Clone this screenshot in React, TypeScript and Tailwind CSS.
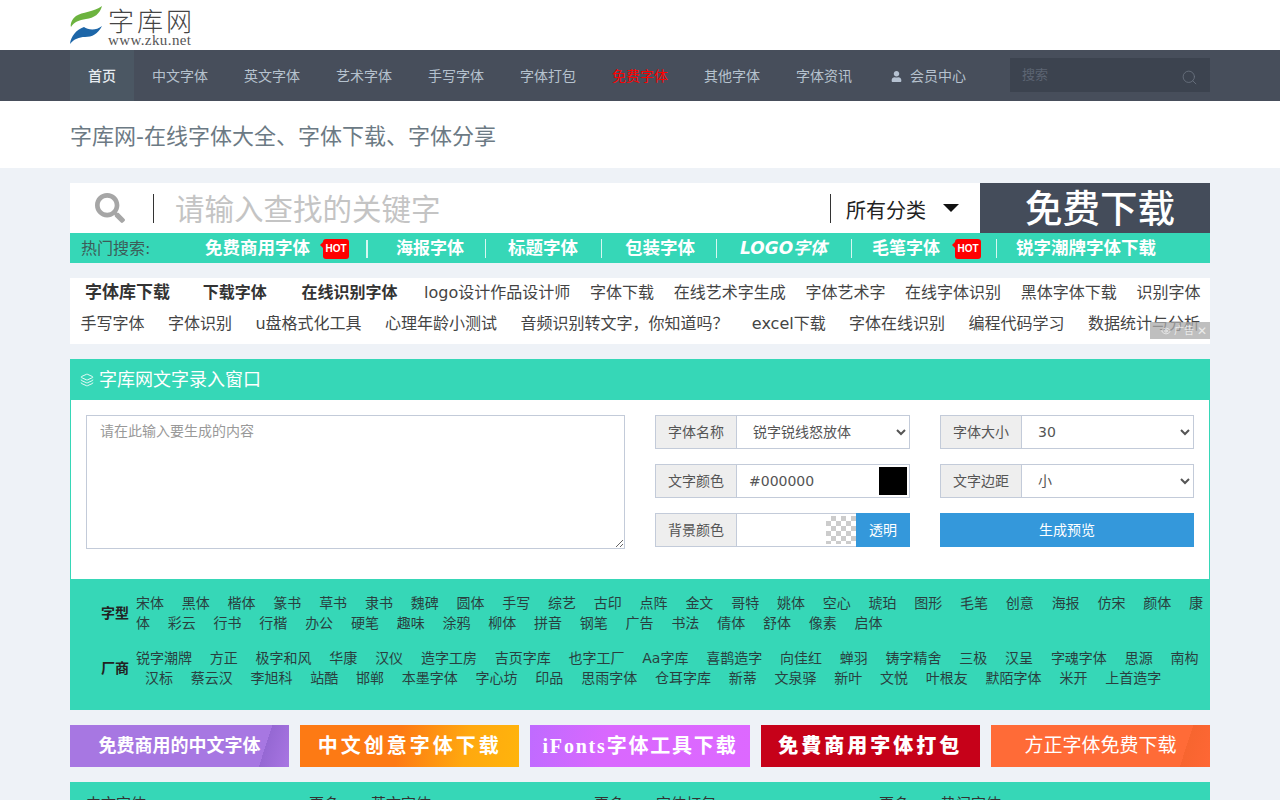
import { Eye, Layers, Search } from 'lucide-react';
import { FaSearch, FaUser } from 'react-icons/fa';

const navItems = ['中文字体', '英文字体', '艺术字体', '手写字体', '字体打包', '免费字体', '其他字体', '字体资讯'];

const hotRowOne = [
  { text: '字体库下载', cls: 'text-[17px] font-bold text-[#333] ml-0' },
  { text: '下载字体', cls: 'font-bold text-[#333] ml-[13px]' },
  { text: '在线识别字体', cls: 'font-bold text-[#333] ml-[15px]' },
  { text: 'logo设计作品设计师', cls: 'ml-[7px]' },
  { text: '字体下载', cls: '' },
  { text: '在线艺术字生成', cls: '' },
  { text: '字体艺术字', cls: '' },
  { text: '在线字体识别', cls: '' },
  { text: '黑体字体下载', cls: '' },
  { text: '识别字体', cls: '' },
];

const hotRowTwo = ['手写字体', '字体识别', 'u盘格式化工具', '心理年龄小测试', '音频识别转文字，你知道吗？', 'excel下载', '字体在线识别', '编程代码学习', '数据统计与分析'];

const types = ['宋体', '黑体', '楷体', '篆书', '草书', '隶书', '魏碑', '圆体', '手写', '综艺', '古印', '点阵', '金文', '哥特', '姚体', '空心', '琥珀', '图形', '毛笔', '创意', '海报', '仿宋', '颜体', '康体', '彩云', '行书', '行楷', '办公', '硬笔', '趣味', '涂鸦', '柳体', '拼音', '钢笔', '广告', '书法', '倩体', '舒体', '像素', '启体'];

const makers = ['锐字潮牌', '方正', '极字和风', '华康', '汉仪', '造字工房', '吉页字库', '也字工厂', 'Aa字库', '喜鹊造字', '向佳红', '蝉羽', '铸字精舍', '三极', '汉呈', '字魂字体', '思源', '南构', '汉标', '蔡云汉', '李旭科', '站酷', '邯郸', '本墨字体', '字心坊', '印品', '思雨字体', '仓耳字库', '新蒂', '文泉驿', '新叶', '文悦', '叶根友', '默陌字体', '米开', '上首造字'];

const banners = [
  { text: '免费商用的中文字体', cls: 'bg-[linear-gradient(108deg,#a777e2_87%,#9568d3_87%,#a472df_97%,#a777e2_100%)] text-[18px] font-bold' },
  { text: '中文创意字体下载', cls: 'bg-[linear-gradient(100deg,#fd7a14_45%,#ffa80f_75%,#ffb40c_100%)] text-[20px] tracking-[3px] font-bold' },
  { text: 'iFonts字体工具下载', cls: 'bg-[linear-gradient(100deg,#bf6bff_0%,#d968fe_35%,#dd68ff_100%)] text-[20px] tracking-[1.8px] font-bold' },
  { text: '免費商用字体打包', cls: 'bg-[#c60119] text-[20px] tracking-[3px] font-black' },
  { text: '方正字体免费下载', cls: 'bg-[linear-gradient(108deg,#ff6b37_87%,#f7652f_87%,#ff6735_100%)] text-[19px]' },
];

function Logo() {
  return (
    <div className="flex items-center h-[50px]">
      <svg width="34" height="39" viewBox="0 0 34 39" className="shrink-0">
        <path d="M32 0C24 6 12 6 6 10C2 13 0 18 1 21C4 16 9 14 16 13C24 12 30 8 32 0Z" fill="#6cb33f" />
        <path d="M0 38C1 30 6 24 14 21C18 24 26 25 32 20C28 28 22 31 15 31C9 31 4 33 0 38Z" fill="#1d66a8" />
      </svg>
      <div className="ml-[4px] pt-[3px] text-[#444]">
        <div className="text-[26px] leading-[27px] tracking-[3px] font-light">字库网</div>
        <div className="text-[15px] leading-[9px] tracking-[0.4px] text-[#555] font-['Liberation_Serif',serif]">www.zku.net</div>
      </div>
    </div>
  );
}

function HotBadge({ cls }: { cls: string }) {
  return (
    <span className={`relative flex items-center justify-center w-[26px] h-[20px] rounded-[3px] bg-[#f00] text-white text-[10px] font-bold font-['Liberation_Sans',sans-serif] ${cls}`}>
      HOT
      <span className="absolute left-[-3px] top-[3px] border-y-[3px] border-r-[3px] border-y-transparent border-r-[#f00]" />
    </span>
  );
}

function FormLabel({ text }: { text: string }) {
  return (
    <span className="flex items-center justify-center shrink-0 w-[81px] h-full bg-[#eee] border-r border-[#c3cbd9] text-[14px] text-[#555]">
      {text}
    </span>
  );
}

export default function App() {
  return (
    <div className="min-h-screen bg-[#eef2f7] font-['DejaVu_Sans','Noto_Sans_CJK_SC',sans-serif]">
      {/* Logo bar */}
      <div className="bg-white h-[50px] px-[70px]">
        <Logo />
      </div>

      {/* Main navigation */}
      <nav className="bg-[#474e5b] h-[51px] px-[70px] flex text-[14px] text-[#b6c2ce]">
        <a className="flex items-center px-[18px] pt-[2px] bg-[#4b5763] text-[#e6ebf0] font-medium">首页</a>
        {navItems.map((item) => (
          <a key={item} className={`flex items-center px-[18px] pt-[2px] ${item === '免费字体' ? 'text-[#f00]' : ''}`}>
            {item}
          </a>
        ))}
        <a className="flex items-center pl-[21px] pr-[18px] pt-[2px]">
          <FaUser className="mr-[8px] text-[#b6c2d2]" size={11} />
          会员中心
        </a>
        <div className="ml-[26px] mt-[8px] flex items-center justify-between w-[200px] h-[34px] bg-[#3c434f] pl-[12px] pr-[12px] text-[13px] text-[#5d6573]">
          <span>搜索</span>
          <Search size={17} strokeWidth={1.2} className="mt-[4px] text-[#6a7280]" />
        </div>
      </nav>

      {/* Page title */}
      <div className="bg-white h-[67px] px-[70px] pt-[3px] flex items-center">
        <h1 className="text-[22px] text-[#6c7a84]">字库网-在线字体大全、字体下载、字体分享</h1>
      </div>

      <main className="mx-[70px] pt-[15px]">
        {/* Search bar */}
        <div className="flex h-[50px] bg-white">
          <div className="flex items-center pl-[25px] w-[105px]">
            <FaSearch size={30} className="text-[#a6a6a6]" />
          </div>
          <div className="flex items-center flex-1 text-[29.5px] text-[#c4c4c4]">
            <span className="w-px h-[29px] bg-[#333] mr-[21px] -ml-[22px]" />
            <span className="pt-[5px]">请输入查找的关键字</span>
          </div>
          <div className="flex items-center w-[150px]">
            <span className="w-px h-[29px] bg-[#333] mr-[15px]" />
            <span className="text-[20px] text-[#222] pt-[6px]">所有分类</span>
            <span className="ml-[17px] border-x-[8px] border-t-[8px] border-x-transparent border-t-[#111]" />
          </div>
          <div className="flex items-center justify-center w-[230px] pl-[10px] pt-[3px] bg-[#444c5a] text-[37.5px] text-white font-medium">免费下载</div>
        </div>

        {/* Hot searches */}
        <div className="flex items-center h-[30px] pt-[1px] bg-[#36d7b7] text-white font-bold text-[17.5px] pl-[11px]">
          <span className="w-[124px] text-[16px] font-normal text-[#3d5c58]">热门搜索:</span>
          <span>免费商用字体</span>
          <HotBadge cls="ml-[13px]" />
          <span className="w-[2px] h-[18px] bg-white/80 ml-[17px]" />
          <span className="ml-[28px] text-[17px]">海报字体</span>
          <span className="w-px h-[19px] bg-white/80 ml-[21px]" />
          <span className="ml-[22px]">标题字体</span>
          <span className="w-px h-[19px] bg-white/80 ml-[23px]" />
          <span className="ml-[23px]">包装字体</span>
          <span className="w-px h-[19px] bg-white/80 ml-[21px]" />
          <span className="ml-[23px] text-[17px] italic">LOGO字体</span>
          <span className="w-px h-[19px] bg-white/80 ml-[24px]" />
          <span className="ml-[20px] text-[17px]">毛笔字体</span>
          <HotBadge cls="ml-[15px]" />
          <span className="w-px h-[19px] bg-white/80 ml-[15px]" />
          <span className="ml-[19px]">锐字潮牌字体下载</span>
        </div>

        {/* Keyword links */}
        <div className="relative mt-[15px] h-[66px] bg-white text-[16px] text-[#444]">
          <div className="flex items-center gap-[19.7px] h-[29px] pl-[15px]">
            {hotRowOne.map((item) => (
              <a key={item.text} className={`whitespace-nowrap ${item.cls}`}>
                {item.text}
              </a>
            ))}
          </div>
          <div className="flex items-center justify-between h-[33px] pl-[10.5px] pr-[10px]">
            {hotRowTwo.map((item) => (
              <a key={item} className="whitespace-nowrap">
                {item}
              </a>
            ))}
          </div>
          <div className="absolute right-0 top-[44px] flex items-center justify-end gap-[3px] w-[60px] h-[17px] pr-[3px] bg-[#aaa]/75 text-[10px] text-white/70">
            <Eye size={10} />
            <span>广告</span>
            <span className="text-[12px]">✕</span>
          </div>
        </div>

        {/* Text input panel */}
        <section className="mt-[15px] border-x border-[#36d7b7]">
          <div className="flex items-center h-[41px] bg-[#36d7b7] pl-[10px] text-[18px] text-white -mx-px">
            <Layers size={14} className="mr-[5px]" strokeWidth={1.5} />
            字库网文字录入窗口
          </div>
          <div className="flex h-[179px] bg-white pt-[15px] pl-[15px]">
            <textarea
              className="w-[539px] h-[134px] px-[13px] py-[5px] border border-[#c3cbd9] text-[14px] outline-none placeholder:text-[#999]"
              placeholder="请在此输入要生成的内容"
            />
            <div className="grid grid-cols-[255px_254px] gap-x-[30px] gap-y-[15px] ml-[30px] content-start text-[14px] text-[#555]">
              <div className="flex h-[34px] border border-[#c3cbd9]">
                <FormLabel text="字体名称" />
                <select className="flex-1 min-w-0 bg-white pl-[12px] outline-none">
                  <option>锐字锐线怒放体</option>
                </select>
              </div>
              <div className="flex h-[34px] border border-[#c3cbd9]">
                <FormLabel text="字体大小" />
                <select className="flex-1 min-w-0 bg-white pl-[12px] outline-none">
                  <option>30</option>
                </select>
              </div>
              <div className="flex h-[34px] border border-[#c3cbd9]">
                <FormLabel text="文字颜色" />
                <span className="flex flex-1 items-center justify-between pl-[12px] pr-[2px]">
                  #000000
                  <span className="w-[28px] h-[28px] bg-black" />
                </span>
              </div>
              <div className="flex h-[34px] border border-[#c3cbd9]">
                <FormLabel text="文字边距" />
                <select className="flex-1 min-w-0 bg-white pl-[12px] outline-none">
                  <option>小</option>
                </select>
              </div>
              <div className="flex h-[34px] border-y border-l border-[#c3cbd9]">
                <FormLabel text="背景颜色" />
                <span className="flex flex-1 items-center justify-end">
                  <span className="w-[30px] h-[28px] bg-[repeating-conic-gradient(#ccc_0_25%,#fff_0_50%)] bg-[length:10px_10px]" />
                </span>
                <span className="flex items-center justify-center w-[54px] -my-px bg-[#3498db] text-white">透明</span>
              </div>
              <button className="h-[34px] bg-[#3498db] text-white">生成预览</button>
            </div>
          </div>

          {/* Type and maker filters */}
          <div className="bg-[#36d7b7] -mx-px h-[131px] pt-[14px] leading-[20px] text-[#2a3f40]">
            <div className="flex items-center h-[40px]">
              <span className="w-[66px] shrink-0 pl-[31px] text-[14px] font-bold text-[#222]">字型</span>
              <p className="w-[1074px] text-[14px]">
                {types.map((item, i) => (
                  <a key={item} className={i === 0 ? 'mr-[8.9px]' : 'mx-[8.9px]'}>
                    {item}
                  </a>
                ))}
              </p>
            </div>
            <div className="flex items-center h-[40px] mt-[15px]">
              <span className="w-[66px] shrink-0 pl-[31px] text-[14px] font-bold text-[#222]">厂商</span>
              <p className="w-[1074px] text-[14px]">
                {makers.map((item, i) => (
                  <a key={item} className={i === 0 ? 'mr-[8.9px]' : 'mx-[8.9px]'}>
                    {item}
                  </a>
                ))}
              </p>
            </div>
          </div>
        </section>

        {/* Promo banners */}
        <div className="grid grid-cols-5 gap-[11px] mt-[15px]">
          {banners.map((banner) => (
            <a key={banner.text} className={`flex items-center justify-center h-[42px] text-white whitespace-nowrap font-['Liberation_Serif','Noto_Sans_CJK_SC',serif] ${banner.cls}`}>
              {banner.text}
            </a>
          ))}
        </div>

        {/* Category lists */}
        <div className="grid grid-cols-4 mt-[15px] h-[60px] bg-[#36d7b7] pt-[11px] text-[15px] text-[#333]">
          {['中文字体', '英文字体', '字体打包', '热门字体'].map((title) => (
            <div key={title} className="flex justify-between pl-[16px] pr-[16px] h-[24px]">
              <span>{title}</span>
              {title !== '热门字体' && <span>更多</span>}
            </div>
          ))}
        </div>
      </main>
    </div>
  );
}
